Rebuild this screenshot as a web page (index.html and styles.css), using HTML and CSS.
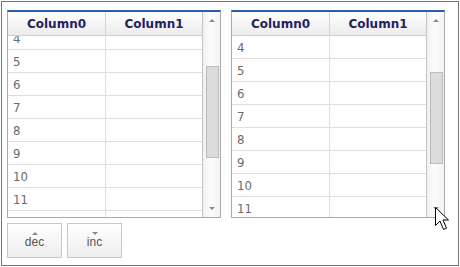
FILE: index.html
```html
<!DOCTYPE html>
<html>
<head>
<meta charset="utf-8">
<link rel="stylesheet" href="styles.css">
</head>
<body>
<div class="frame">
  <div class="grids">
    <div class="grid">
      <div class="table">
        <div class="head"><div class="hc c0">Column0</div><div class="hc c1">Column1</div></div>
        <div class="body">
          <div class="rows shifted">
            <div class="row"><div class="cell c0">4</div><div class="cell c1"></div></div>
            <div class="row"><div class="cell c0">5</div><div class="cell c1"></div></div>
            <div class="row"><div class="cell c0">6</div><div class="cell c1"></div></div>
            <div class="row"><div class="cell c0">7</div><div class="cell c1"></div></div>
            <div class="row"><div class="cell c0">8</div><div class="cell c1"></div></div>
            <div class="row"><div class="cell c0">9</div><div class="cell c1"></div></div>
            <div class="row"><div class="cell c0">10</div><div class="cell c1"></div></div>
            <div class="row"><div class="cell c0">11</div><div class="cell c1"></div></div>
            <div class="row"><div class="cell c0">12</div><div class="cell c1"></div></div>
          </div>
        </div>
      </div>
      <div class="scroll">
        <div class="arrow"><span class="tri up"></span></div>
        <div class="track"><div class="thumb thumb-a"></div></div>
        <div class="arrow"><span class="tri down"></span></div>
      </div>
    </div>
    <div class="grid">
      <div class="table">
        <div class="head"><div class="hc c0">Column0</div><div class="hc c1">Column1</div></div>
        <div class="body">
          <div class="rows">
            <div class="row"><div class="cell c0">4</div><div class="cell c1"></div></div>
            <div class="row"><div class="cell c0">5</div><div class="cell c1"></div></div>
            <div class="row"><div class="cell c0">6</div><div class="cell c1"></div></div>
            <div class="row"><div class="cell c0">7</div><div class="cell c1"></div></div>
            <div class="row"><div class="cell c0">8</div><div class="cell c1"></div></div>
            <div class="row"><div class="cell c0">9</div><div class="cell c1"></div></div>
            <div class="row"><div class="cell c0">10</div><div class="cell c1"></div></div>
            <div class="row"><div class="cell c0">11</div><div class="cell c1"></div></div>
          </div>
        </div>
      </div>
      <div class="scroll">
        <div class="arrow"><span class="tri up"></span></div>
        <div class="track"><div class="thumb thumb-b"></div></div>
        <div class="arrow"><span class="tri down"></span></div>
      </div>
    </div>
  </div>
  <div class="buttons">
    <div class="btn"><span class="tri up"></span><span class="lbl">dec</span></div>
    <div class="btn"><span class="tri down"></span><span class="lbl">inc</span></div>
  </div>
  <svg class="cursor" width="17" height="25" viewBox="0 0 17 25">
    <path d="M0.5 0.5 L0.5 18.5 L5 14 L8.5 22.5 L11.5 21.2 L8 13 L13.5 13 Z" fill="#fff" stroke="#000" stroke-width="1" stroke-linejoin="miter"/>
  </svg>
</div>
</body>
</html>
```
FILE: styles.css
```css
* { box-sizing: border-box; }
html, body { margin: 0; padding: 0; background: #fff; }
body { width: 460px; height: 267px; overflow: hidden; }

.frame {
  position: relative;
  margin: 1px;
  width: 458px;
  height: 265px;
  border: 1px solid #767676;
  padding: 8px 5px 0 5px;
}

.grids { display: flex; gap: 10px; }

.grid {
  display: flex;
  width: 214px;
  height: 208px;
  border: 1px solid #a9a9a9;
  border-top: 2px solid #2660aa;
}

.table { display: flex; flex-direction: column; width: 194px; }

.head {
  display: flex;
  height: 24px;
  border-bottom: 1px solid #cfcfcf;
  background: linear-gradient(#ffffff, #ececec);
}
.hc {
  display: flex;
  align-items: center;
  justify-content: center;
  font-family: "DejaVu Sans", sans-serif;
  font-weight: bold;
  font-size: 12px;
  color: #23235e;
}
.c0 { width: 98px; border-right: 1px solid #d4d4d4; }
.c1 { width: 96px; }

.body { height: 181px; overflow: hidden; }
.rows { display: flex; flex-direction: column; }
.rows.shifted { margin-top: -9px; }
.row { display: flex; height: 23px; flex: none; border-bottom: 1px solid #dedede; }
.cell {
  display: flex;
  align-items: center;
  padding-left: 5px;
  font-family: "Liberation Sans Narrow", "DejaVu Sans Condensed", sans-serif;
  font-size: 13px;
  color: #6a6a6a;
}
.cell.c0 { border-right: 1px solid #dedede; }

.scroll {
  width: 18px;
  display: flex;
  flex-direction: column;
  border-left: 1px solid #c4c4c4;
  background: linear-gradient(to right, #f0f0f0, #fcfcfc 40%, #f4f4f4);
}
.arrow { height: 17px; display: flex; align-items: center; justify-content: center; }
.track { flex: 1; }
.thumb {
  width: 13px;
  height: 92px;
  margin-left: 3px;
  background: #dcdcdc;
  border: 1px solid #bcbcbc;
}
.thumb-a { margin-top: 37px; }
.thumb-b { margin-top: 43px; }

.tri { width: 0; height: 0; border-left: 3px solid transparent; border-right: 3px solid transparent; }
.tri.up { border-bottom: 3px solid #8a8a8a; }
.tri.down { border-top: 3px solid #8a8a8a; }

.buttons { display: flex; gap: 5px; margin-top: 5px; }
.btn {
  width: 55px;
  height: 35px;
  border: 1px solid #c8c8c8;
  background: linear-gradient(#ffffff, #eeeeee);
  display: flex;
  flex-direction: column;
  align-items: center;
  justify-content: center;
  gap: 1px;
}
.lbl {
  font-family: "Liberation Sans", sans-serif;
  font-size: 12px;
  line-height: 13px;
  color: #555;
}

.cursor { position: absolute; left: 433px; top: 205px; }
```
